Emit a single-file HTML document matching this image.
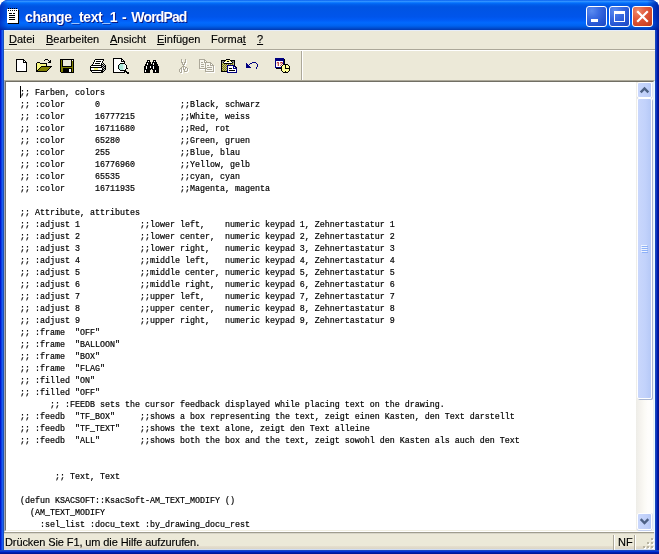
<!DOCTYPE html>
<html lang="de">
<head>
<meta charset="utf-8">
<title>change_text_1 - WordPad</title>
<style>
html,body{margin:0;padding:0;}
body{width:659px;height:554px;overflow:hidden;background:#fff;position:relative;font-family:"Liberation Sans",sans-serif;}
div,span,pre,svg{position:absolute;}
#win{left:0;top:0;width:659px;height:554px;background:#0831d9;border-radius:8px 8px 0 0;overflow:hidden;}
#title{left:0;top:0;width:659px;height:30px;
background:linear-gradient(to bottom,#0058ee 0%,#3593ff 4%,#288eff 6%,#127dff 8%,#036ffc 10%,#0262ee 14%,#0057e5 20%,#0054e3 24%,#0055eb 56%,#005bf5 66%,#026afe 76%,#0062ef 86%,#0052d6 92%,#0046c4 96%,#0138b0 100%);}
#title .edgeL{left:0;top:0;width:8px;height:30px;background:linear-gradient(to right,rgba(0,20,160,.55),rgba(0,20,160,0));}
#title .edgeR{right:0;top:0;width:12px;height:30px;background:linear-gradient(to left,rgba(0,15,140,.75),rgba(0,20,160,0));}
#cap{left:25px;top:9px;color:#fff;font-weight:bold;font-size:14px;line-height:16px;white-space:nowrap;letter-spacing:-0.4px;word-spacing:1.5px;text-shadow:1px 1px 0 #0a1883;}
.tb{top:6px;width:19px;height:19px;border:1px solid #fff;border-radius:3px;}
.tb.blue{background:radial-gradient(circle at 25% 20%,#5a8bf0 0%,#3a6be2 35%,#2555d2 70%,#1f48c0 100%);}
.tb.red{background:radial-gradient(circle at 25% 20%,#ee8a6c 0%,#e0583a 40%,#cf4526 75%,#b83a1c 100%);}
#bl{left:0;top:30px;width:4px;height:524px;background:linear-gradient(to right,#0019cf 0,#0019cf 1px,#0d3fe3 1px,#0d3fe3 2px,#1a5df0 2px,#1a5df0 3px,#1a50bb 3px);}
#br{right:0;top:30px;width:4px;height:524px;background:linear-gradient(to left,#00138f 0,#00138f 1px,#001aa8 1px,#001aa8 2px,#0c34c2 2px,#0c34c2 3px,#1846b8 3px);}
#bb{left:0;bottom:0;width:659px;height:4px;background:linear-gradient(to top,#001898 0,#001898 1px,#0020b0 1px,#0020b0 2px,#0435d8 2px,#0435d8 3px,#1a48c0 3px);}
#client{left:4px;top:30px;width:651px;height:520px;background:#ece9d8;box-shadow:inset 0 1px 0 #e6edfa;}
#menu{left:0;top:0;width:651px;height:19px;font-size:11px;color:#000;}
#menu span{top:3px;line-height:13px;white-space:nowrap;}
#sep1{left:0;top:19px;width:651px;height:1px;background:#aca899;}
#sep2{left:0;top:20px;width:651px;height:1px;background:#fff;}
#tsep1{left:297px;top:21px;width:1px;height:29px;background:#aca899;}
#tsep2{left:298px;top:21px;width:1px;height:29px;background:#fff;}
#icons{left:0;top:0;width:659px;height:554px;}
#doc{left:0;top:50px;width:651px;height:452px;background:#fff;box-sizing:border-box;border:1px solid;border-color:#aca899 #e8fbff #fff #9ba5bb;}
#doc .in{left:0;top:0;width:649px;height:450px;box-sizing:border-box;border:1px solid;border-color:#716f64 #e9f0f8 #f1efe2 #75736a;}
#text{left:15px;top:6px;margin:0;font-family:"Liberation Mono",monospace;font-size:8.33px;line-height:12px;color:#000;white-space:pre;-webkit-text-stroke:0.2px #000;}
#caret{left:15px;top:5px;width:1px;height:12px;background:#000;}
#sb{left:631px;top:1px;width:17px;height:448px;background:linear-gradient(to right,#eeede8 0%,#f5f3ee 25%,#fbfaf5 50%,#fefdfb 70%,#fefefb 100%);}
.sbtn{left:1px;width:13px;height:14px;border:1px solid #fff;border-radius:2px;background:linear-gradient(to right,#c9d7fc,#bfcff9 70%,#b6c8f6);box-shadow:0 1px 0 #c4d0ee,1px 0 0 #dde4f4;}
#thumb{left:1px;top:16px;width:13px;height:299px;border:1px solid #fff;border-radius:2px;background:linear-gradient(to right,#c9d7fc,#c2d2fb 55%,#b6c9f7);box-shadow:1px 1px 0 #a9b6d2;}
#status{box-shadow:inset -1px 0 0 #e2eafa;left:0;top:502px;width:651px;height:18px;font-size:11px;background:linear-gradient(to bottom,#a09d8e 0,#a09d8e 1px,#d8d5c8 1px,#d8d5c8 2px,#ece9d8 2px,#ece9d8 14px,#e6dfcf 14px,#dbd6c6 17px,#d0ddf5 17px,#d0ddf5 18px);}
#status .t{left:2px;top:4px;line-height:13px;white-space:nowrap;}
.ssep{top:3px;width:1px;height:15px;}
#text,#menu,#status,#cap{will-change:transform;}
#menu,#status{-webkit-text-stroke:0.15px #000;}
</style>
</head>
<body>
<div id="win">
<div id="title"><div class="edgeL"></div><div class="edgeR"></div>
<div id="cap">change_text_1 - <span style="position:static;letter-spacing:-0.85px">WordPad</span></div>
<div class="tb blue" style="left:586px"><svg width="19" height="19" viewBox="0 0 19 19"><rect x="4" y="12" width="7" height="3" fill="#fff"/></svg></div>
<div class="tb blue" style="left:609px"><svg width="19" height="19" viewBox="0 0 19 19"><g fill="#fff" shape-rendering="crispEdges"><rect x="4" y="4" width="11" height="3"/><rect x="4" y="4" width="1" height="11"/><rect x="14" y="4" width="1" height="11"/><rect x="4" y="14" width="11" height="1"/></g></svg></div>
<div class="tb red" style="left:632px"><svg width="19" height="19" viewBox="0 0 19 19"><path d="M5 5l9 9M14 5l-9 9" stroke="#fff" stroke-width="2.2" stroke-linecap="square"/></svg></div>
</div>
<div id="bl"></div><div id="br"></div><div id="bb"></div>
<div id="client">
<div id="menu">
<span style="left:5px"><u>D</u>atei</span>
<span style="left:42px"><u>B</u>earbeiten</span>
<span style="left:106px"><u>A</u>nsicht</span>
<span style="left:153px"><u>E</u>infügen</span>
<span style="left:207px">Forma<u>t</u></span>
<span style="left:253px"><u>?</u></span>
</div>
<div id="sep1"></div><div id="sep2"></div>
<div id="tsep1"></div><div id="tsep2"></div>
<div id="doc"><div class="in"></div>
<pre id="text">;; Farben, colors
;; :color      0                ;;Black, schwarz
;; :color      16777215         ;;White, weiss
;; :color      16711680         ;;Red, rot
;; :color      65280            ;;Green, gruen
;; :color      255              ;;Blue, blau
;; :color      16776960         ;;Yellow, gelb
;; :color      65535            ;;cyan, cyan
;; :color      16711935         ;;Magenta, magenta

;; Attribute, attributes
;; :adjust 1            ;;lower left,    numeric keypad 1, Zehnertastatur 1
;; :adjust 2            ;;lower center,  numeric keypad 2, Zehnertastatur 2
;; :adjust 3            ;;lower right,   numeric keypad 3, Zehnertastatur 3
;; :adjust 4            ;;middle left,   numeric keypad 4, Zehnertastatur 4
;; :adjust 5            ;;middle center, numeric keypad 5, Zehnertastatur 5
;; :adjust 6            ;;middle right,  numeric keypad 6, Zehnertastatur 6
;; :adjust 7            ;;upper left,    numeric keypad 7, Zehnertastatur 7
;; :adjust 8            ;;upper center,  numeric keypad 8, Zehnertastatur 8
;; :adjust 9            ;;upper right,   numeric keypad 9, Zehnertastatur 9
;; :frame  "OFF"
;; :frame  "BALLOON"
;; :frame  "BOX"
;; :frame  "FLAG"
;; :filled "ON"
;; :filled "OFF"
      ;; :FEEDB sets the cursor feedback displayed while placing text on the drawing.
;; :feedb  "TF_BOX"     ;;shows a box representing the text, zeigt einen Kasten, den Text darstellt
;; :feedb  "TF_TEXT"    ;;shows the text alone, zeigt den Text alleine
;; :feedb  "ALL"        ;;shows both the box and the text, zeigt sowohl den Kasten als auch den Text


       ;; Text, Text

(defun KSACSOFT::KsacSoft-AM_TEXT_MODIFY ()
  (AM_TEXT_MODIFY
    :sel_list :docu_text :by_drawing_docu_rest
</pre>
<div id="caret"></div>
<div id="sb">
<div class="sbtn" style="top:0px"><svg width="13" height="14" viewBox="0 0 13 14"><path d="M2.7 9.3l3.8-3.8 3.8 3.8" fill="none" stroke="#4d6185" stroke-width="2.4"/></svg></div>
<div id="thumb"><svg width="13" height="299" viewBox="0 0 13 299" shape-rendering="crispEdges"><g transform="translate(3,146)"><rect x="0" y="0" width="6" height="1" fill="#eef4fe"/><rect x="1" y="1" width="6" height="1" fill="#8cb0f8"/><rect x="0" y="2" width="6" height="1" fill="#eef4fe"/><rect x="1" y="3" width="6" height="1" fill="#8cb0f8"/><rect x="0" y="4" width="6" height="1" fill="#eef4fe"/><rect x="1" y="5" width="6" height="1" fill="#8cb0f8"/><rect x="0" y="6" width="6" height="1" fill="#eef4fe"/><rect x="1" y="7" width="6" height="1" fill="#8cb0f8"/></g></svg></div>
<div class="sbtn" style="top:431px;height:15px"><svg width="13" height="15" viewBox="0 0 13 15"><path d="M2.7 5.2l3.8 3.8 3.8-3.8" fill="none" stroke="#4d6185" stroke-width="2.4"/></svg></div>
</div>
</div>
<div id="status"><div class="t" style="left:1px;letter-spacing:-0.1px">Drücken Sie F1, um die Hilfe aufzurufen.</div>
<div class="ssep" style="left:609px;background:#aca899"></div><div class="ssep" style="left:610px;background:#fff"></div>
<div class="t" style="left:614px">NF</div>
<div class="ssep" style="left:630px;background:#aca899"></div><div class="ssep" style="left:631px;background:#fff"></div>
<svg style="left:638px;top:5px" width="13" height="13" viewBox="0 0 13 13"><g fill="#fff"><rect x="10" y="2" width="2" height="2"/><rect x="6" y="6" width="2" height="2"/><rect x="10" y="6" width="2" height="2"/><rect x="2" y="10" width="2" height="2"/><rect x="6" y="10" width="2" height="2"/><rect x="10" y="10" width="2" height="2"/></g><g fill="#b8b4a2"><rect x="9" y="1" width="2" height="2"/><rect x="5" y="5" width="2" height="2"/><rect x="9" y="5" width="2" height="2"/><rect x="1" y="9" width="2" height="2"/><rect x="5" y="9" width="2" height="2"/><rect x="9" y="9" width="2" height="2"/></g></svg>
</div>
</div>
<svg id="icons" width="659" height="554" viewBox="0 0 659 554" shape-rendering="crispEdges"><defs><clipPath id="calclip"><path d="M276 61h7v3h-1v1h-1v1h-5z"/></clipPath></defs><rect x="16" y="59" width="8" height="1" fill="#000000"/><rect x="16" y="60" width="1" height="1" fill="#000000"/><rect x="17" y="60" width="6" height="1" fill="#ffffff"/><rect x="23" y="60" width="2" height="1" fill="#000000"/><rect x="16" y="61" width="1" height="1" fill="#000000"/><rect x="17" y="61" width="6" height="1" fill="#ffffff"/><rect x="23" y="61" width="1" height="1" fill="#000000"/><rect x="24" y="61" width="1" height="1" fill="#ffffff"/><rect x="25" y="61" width="1" height="1" fill="#000000"/><rect x="16" y="62" width="1" height="1" fill="#000000"/><rect x="17" y="62" width="6" height="1" fill="#ffffff"/><rect x="23" y="62" width="4" height="1" fill="#000000"/><rect x="16" y="63" width="1" height="1" fill="#000000"/><rect x="17" y="63" width="9" height="1" fill="#ffffff"/><rect x="26" y="63" width="1" height="1" fill="#000000"/><rect x="16" y="64" width="1" height="1" fill="#000000"/><rect x="17" y="64" width="9" height="1" fill="#ffffff"/><rect x="26" y="64" width="1" height="1" fill="#000000"/><rect x="16" y="65" width="1" height="1" fill="#000000"/><rect x="17" y="65" width="9" height="1" fill="#ffffff"/><rect x="26" y="65" width="1" height="1" fill="#000000"/><rect x="16" y="66" width="1" height="1" fill="#000000"/><rect x="17" y="66" width="9" height="1" fill="#ffffff"/><rect x="26" y="66" width="1" height="1" fill="#000000"/><rect x="16" y="67" width="1" height="1" fill="#000000"/><rect x="17" y="67" width="9" height="1" fill="#ffffff"/><rect x="26" y="67" width="1" height="1" fill="#000000"/><rect x="16" y="68" width="1" height="1" fill="#000000"/><rect x="17" y="68" width="9" height="1" fill="#ffffff"/><rect x="26" y="68" width="1" height="1" fill="#000000"/><rect x="16" y="69" width="1" height="1" fill="#000000"/><rect x="17" y="69" width="9" height="1" fill="#ffffff"/><rect x="26" y="69" width="1" height="1" fill="#000000"/><rect x="16" y="70" width="1" height="1" fill="#000000"/><rect x="17" y="70" width="9" height="1" fill="#ffffff"/><rect x="26" y="70" width="1" height="1" fill="#000000"/><rect x="16" y="71" width="11" height="1" fill="#000000"/><rect x="45" y="59" width="3" height="1" fill="#000000"/><rect x="44" y="60" width="1" height="1" fill="#000000"/><rect x="48" y="60" width="1" height="1" fill="#000000"/><rect x="50" y="60" width="1" height="1" fill="#000000"/><rect x="49" y="61" width="2" height="1" fill="#000000"/><rect x="37" y="62" width="3" height="1" fill="#000000"/><rect x="48" y="62" width="3" height="1" fill="#000000"/><rect x="36" y="63" width="1" height="1" fill="#000000"/><rect x="37" y="63" width="3" height="1" fill="#f7f77f"/><rect x="40" y="63" width="7" height="1" fill="#000000"/><rect x="36" y="64" width="1" height="1" fill="#000000"/><rect x="37" y="64" width="9" height="1" fill="#f7f77f"/><rect x="46" y="64" width="1" height="1" fill="#000000"/><rect x="36" y="65" width="1" height="1" fill="#000000"/><rect x="37" y="65" width="9" height="1" fill="#f7f77f"/><rect x="46" y="65" width="1" height="1" fill="#000000"/><rect x="36" y="66" width="1" height="1" fill="#000000"/><rect x="37" y="66" width="4" height="1" fill="#f7f77f"/><rect x="41" y="66" width="11" height="1" fill="#000000"/><rect x="36" y="67" width="1" height="1" fill="#000000"/><rect x="37" y="67" width="3" height="1" fill="#f7f77f"/><rect x="40" y="67" width="1" height="1" fill="#000000"/><rect x="41" y="67" width="9" height="1" fill="#808000"/><rect x="50" y="67" width="1" height="1" fill="#000000"/><rect x="36" y="68" width="1" height="1" fill="#000000"/><rect x="37" y="68" width="2" height="1" fill="#f7f77f"/><rect x="39" y="68" width="1" height="1" fill="#000000"/><rect x="40" y="68" width="9" height="1" fill="#808000"/><rect x="49" y="68" width="1" height="1" fill="#000000"/><rect x="36" y="69" width="1" height="1" fill="#000000"/><rect x="37" y="69" width="1" height="1" fill="#f7f77f"/><rect x="38" y="69" width="1" height="1" fill="#000000"/><rect x="39" y="69" width="9" height="1" fill="#808000"/><rect x="48" y="69" width="1" height="1" fill="#000000"/><rect x="36" y="70" width="2" height="1" fill="#000000"/><rect x="38" y="70" width="9" height="1" fill="#808000"/><rect x="47" y="70" width="1" height="1" fill="#000000"/><rect x="36" y="71" width="11" height="1" fill="#000000"/><rect x="60" y="59" width="14" height="1" fill="#000000"/><rect x="60" y="60" width="1" height="1" fill="#000000"/><rect x="61" y="60" width="1" height="1" fill="#808000"/><rect x="62" y="60" width="1" height="1" fill="#000000"/><rect x="63" y="60" width="8" height="1" fill="#ece9d8"/><rect x="71" y="60" width="1" height="1" fill="#000000"/><rect x="72" y="60" width="1" height="1" fill="#ffffff"/><rect x="73" y="60" width="1" height="1" fill="#000000"/><rect x="60" y="61" width="1" height="1" fill="#000000"/><rect x="61" y="61" width="1" height="1" fill="#808000"/><rect x="62" y="61" width="1" height="1" fill="#000000"/><rect x="63" y="61" width="8" height="1" fill="#ece9d8"/><rect x="71" y="61" width="1" height="1" fill="#000000"/><rect x="72" y="61" width="1" height="1" fill="#808000"/><rect x="73" y="61" width="1" height="1" fill="#000000"/><rect x="60" y="62" width="1" height="1" fill="#000000"/><rect x="61" y="62" width="1" height="1" fill="#808000"/><rect x="62" y="62" width="1" height="1" fill="#000000"/><rect x="63" y="62" width="8" height="1" fill="#ece9d8"/><rect x="71" y="62" width="1" height="1" fill="#000000"/><rect x="72" y="62" width="1" height="1" fill="#808000"/><rect x="73" y="62" width="1" height="1" fill="#000000"/><rect x="60" y="63" width="1" height="1" fill="#000000"/><rect x="61" y="63" width="1" height="1" fill="#808000"/><rect x="62" y="63" width="1" height="1" fill="#000000"/><rect x="63" y="63" width="8" height="1" fill="#ece9d8"/><rect x="71" y="63" width="1" height="1" fill="#000000"/><rect x="72" y="63" width="1" height="1" fill="#808000"/><rect x="73" y="63" width="1" height="1" fill="#000000"/><rect x="60" y="64" width="1" height="1" fill="#000000"/><rect x="61" y="64" width="1" height="1" fill="#808000"/><rect x="62" y="64" width="1" height="1" fill="#000000"/><rect x="63" y="64" width="8" height="1" fill="#ece9d8"/><rect x="71" y="64" width="1" height="1" fill="#000000"/><rect x="72" y="64" width="1" height="1" fill="#808000"/><rect x="73" y="64" width="1" height="1" fill="#000000"/><rect x="60" y="65" width="1" height="1" fill="#000000"/><rect x="61" y="65" width="1" height="1" fill="#808000"/><rect x="62" y="65" width="1" height="1" fill="#000000"/><rect x="63" y="65" width="8" height="1" fill="#ece9d8"/><rect x="71" y="65" width="1" height="1" fill="#000000"/><rect x="72" y="65" width="1" height="1" fill="#808000"/><rect x="73" y="65" width="1" height="1" fill="#000000"/><rect x="60" y="66" width="1" height="1" fill="#000000"/><rect x="61" y="66" width="1" height="1" fill="#808000"/><rect x="62" y="66" width="10" height="1" fill="#000000"/><rect x="72" y="66" width="1" height="1" fill="#808000"/><rect x="73" y="66" width="1" height="1" fill="#000000"/><rect x="60" y="67" width="1" height="1" fill="#000000"/><rect x="61" y="67" width="12" height="1" fill="#808000"/><rect x="73" y="67" width="1" height="1" fill="#000000"/><rect x="60" y="68" width="1" height="1" fill="#000000"/><rect x="61" y="68" width="2" height="1" fill="#808000"/><rect x="63" y="68" width="9" height="1" fill="#000000"/><rect x="72" y="68" width="1" height="1" fill="#808000"/><rect x="73" y="68" width="1" height="1" fill="#000000"/><rect x="60" y="69" width="1" height="1" fill="#000000"/><rect x="61" y="69" width="2" height="1" fill="#808000"/><rect x="63" y="69" width="6" height="1" fill="#000000"/><rect x="69" y="69" width="2" height="1" fill="#ffffff"/><rect x="71" y="69" width="1" height="1" fill="#000000"/><rect x="72" y="69" width="1" height="1" fill="#808000"/><rect x="73" y="69" width="1" height="1" fill="#000000"/><rect x="60" y="70" width="1" height="1" fill="#000000"/><rect x="61" y="70" width="2" height="1" fill="#808000"/><rect x="63" y="70" width="6" height="1" fill="#000000"/><rect x="69" y="70" width="2" height="1" fill="#ffffff"/><rect x="71" y="70" width="1" height="1" fill="#000000"/><rect x="72" y="70" width="1" height="1" fill="#808000"/><rect x="73" y="70" width="1" height="1" fill="#000000"/><rect x="60" y="71" width="1" height="1" fill="#000000"/><rect x="61" y="71" width="2" height="1" fill="#808000"/><rect x="63" y="71" width="6" height="1" fill="#000000"/><rect x="69" y="71" width="2" height="1" fill="#ffffff"/><rect x="71" y="71" width="1" height="1" fill="#000000"/><rect x="72" y="71" width="1" height="1" fill="#808000"/><rect x="73" y="71" width="1" height="1" fill="#000000"/><rect x="61" y="72" width="13" height="1" fill="#000000"/><rect x="95" y="59" width="9" height="1" fill="#000000"/><rect x="94" y="60" width="1" height="1" fill="#000000"/><rect x="95" y="60" width="8" height="1" fill="#ffffff"/><rect x="103" y="60" width="1" height="1" fill="#000000"/><rect x="94" y="61" width="1" height="1" fill="#000000"/><rect x="95" y="61" width="1" height="1" fill="#ffffff"/><rect x="96" y="61" width="5" height="1" fill="#000000"/><rect x="101" y="61" width="1" height="1" fill="#ffffff"/><rect x="102" y="61" width="1" height="1" fill="#000000"/><rect x="93" y="62" width="1" height="1" fill="#000000"/><rect x="94" y="62" width="8" height="1" fill="#ffffff"/><rect x="102" y="62" width="1" height="1" fill="#000000"/><rect x="93" y="63" width="1" height="1" fill="#000000"/><rect x="94" y="63" width="1" height="1" fill="#ffffff"/><rect x="95" y="63" width="5" height="1" fill="#000000"/><rect x="100" y="63" width="1" height="1" fill="#ffffff"/><rect x="101" y="63" width="1" height="1" fill="#000000"/><rect x="103" y="63" width="1" height="1" fill="#000000"/><rect x="92" y="64" width="1" height="1" fill="#000000"/><rect x="93" y="64" width="8" height="1" fill="#ffffff"/><rect x="101" y="64" width="2" height="1" fill="#000000"/><rect x="103" y="64" width="1" height="1" fill="#c0c0c0"/><rect x="104" y="64" width="1" height="1" fill="#000000"/><rect x="91" y="65" width="11" height="1" fill="#000000"/><rect x="102" y="65" width="1" height="1" fill="#c0c0c0"/><rect x="103" y="65" width="1" height="1" fill="#000000"/><rect x="104" y="65" width="1" height="1" fill="#c0c0c0"/><rect x="105" y="65" width="1" height="1" fill="#000000"/><rect x="90" y="66" width="1" height="1" fill="#000000"/><rect x="91" y="66" width="10" height="1" fill="#ffffff"/><rect x="101" y="66" width="2" height="1" fill="#000000"/><rect x="103" y="66" width="1" height="1" fill="#c0c0c0"/><rect x="104" y="66" width="2" height="1" fill="#000000"/><rect x="90" y="67" width="12" height="1" fill="#000000"/><rect x="102" y="67" width="1" height="1" fill="#c0c0c0"/><rect x="103" y="67" width="1" height="1" fill="#000000"/><rect x="104" y="67" width="1" height="1" fill="#c0c0c0"/><rect x="105" y="67" width="1" height="1" fill="#000000"/><rect x="90" y="68" width="1" height="1" fill="#000000"/><rect x="91" y="68" width="3" height="1" fill="#ffffff"/><rect x="94" y="68" width="4" height="1" fill="#f7f77f"/><rect x="98" y="68" width="4" height="1" fill="#ffffff"/><rect x="102" y="68" width="1" height="1" fill="#000000"/><rect x="103" y="68" width="1" height="1" fill="#c0c0c0"/><rect x="104" y="68" width="2" height="1" fill="#000000"/><rect x="90" y="69" width="1" height="1" fill="#000000"/><rect x="91" y="69" width="3" height="1" fill="#ffffff"/><rect x="94" y="69" width="4" height="1" fill="#f7f77f"/><rect x="98" y="69" width="4" height="1" fill="#ffffff"/><rect x="102" y="69" width="2" height="1" fill="#000000"/><rect x="104" y="69" width="1" height="1" fill="#c0c0c0"/><rect x="105" y="69" width="1" height="1" fill="#000000"/><rect x="90" y="70" width="13" height="1" fill="#000000"/><rect x="103" y="70" width="1" height="1" fill="#c0c0c0"/><rect x="104" y="70" width="1" height="1" fill="#000000"/><rect x="91" y="71" width="1" height="1" fill="#000000"/><rect x="92" y="71" width="9" height="1" fill="#ffffff"/><rect x="101" y="71" width="3" height="1" fill="#000000"/><rect x="92" y="72" width="11" height="1" fill="#000000"/><rect x="113" y="58" width="9" height="1" fill="#000000"/><rect x="113" y="59" width="1" height="1" fill="#000000"/><rect x="114" y="59" width="7" height="1" fill="#ffffff"/><rect x="121" y="59" width="2" height="1" fill="#000000"/><rect x="113" y="60" width="1" height="1" fill="#000000"/><rect x="114" y="60" width="7" height="1" fill="#ffffff"/><rect x="121" y="60" width="1" height="1" fill="#000000"/><rect x="122" y="60" width="1" height="1" fill="#ffffff"/><rect x="123" y="60" width="1" height="1" fill="#000000"/><rect x="113" y="61" width="1" height="1" fill="#000000"/><rect x="114" y="61" width="7" height="1" fill="#ffffff"/><rect x="121" y="61" width="4" height="1" fill="#000000"/><rect x="113" y="62" width="1" height="1" fill="#000000"/><rect x="114" y="62" width="10" height="1" fill="#ffffff"/><rect x="124" y="62" width="1" height="1" fill="#000000"/><rect x="113" y="63" width="1" height="1" fill="#000000"/><rect x="114" y="63" width="6" height="1" fill="#ffffff"/><rect x="120" y="63" width="5" height="1" fill="#000000"/><rect x="113" y="64" width="1" height="1" fill="#000000"/><rect x="114" y="64" width="5" height="1" fill="#ffffff"/><rect x="119" y="64" width="1" height="1" fill="#000000"/><rect x="120" y="64" width="3" height="1" fill="#a8e6d6"/><rect x="123" y="64" width="1" height="1" fill="#d6f3ec"/><rect x="124" y="64" width="1" height="1" fill="#ffffff"/><rect x="125" y="64" width="1" height="1" fill="#000000"/><rect x="113" y="65" width="1" height="1" fill="#000000"/><rect x="114" y="65" width="4" height="1" fill="#ffffff"/><rect x="118" y="65" width="1" height="1" fill="#000000"/><rect x="119" y="65" width="4" height="1" fill="#a8e6d6"/><rect x="123" y="65" width="2" height="1" fill="#d6f3ec"/><rect x="125" y="65" width="1" height="1" fill="#ffffff"/><rect x="126" y="65" width="1" height="1" fill="#000000"/><rect x="113" y="66" width="1" height="1" fill="#000000"/><rect x="114" y="66" width="4" height="1" fill="#ffffff"/><rect x="118" y="66" width="1" height="1" fill="#000000"/><rect x="119" y="66" width="4" height="1" fill="#a8e6d6"/><rect x="123" y="66" width="2" height="1" fill="#d6f3ec"/><rect x="125" y="66" width="1" height="1" fill="#ffffff"/><rect x="126" y="66" width="1" height="1" fill="#000000"/><rect x="113" y="67" width="1" height="1" fill="#000000"/><rect x="114" y="67" width="4" height="1" fill="#ffffff"/><rect x="118" y="67" width="1" height="1" fill="#000000"/><rect x="119" y="67" width="4" height="1" fill="#a8e6d6"/><rect x="123" y="67" width="2" height="1" fill="#d6f3ec"/><rect x="125" y="67" width="1" height="1" fill="#ffffff"/><rect x="126" y="67" width="1" height="1" fill="#000000"/><rect x="113" y="68" width="1" height="1" fill="#000000"/><rect x="114" y="68" width="4" height="1" fill="#ffffff"/><rect x="118" y="68" width="1" height="1" fill="#000000"/><rect x="119" y="68" width="4" height="1" fill="#a8e6d6"/><rect x="123" y="68" width="2" height="1" fill="#d6f3ec"/><rect x="125" y="68" width="1" height="1" fill="#ffffff"/><rect x="126" y="68" width="2" height="1" fill="#000000"/><rect x="113" y="69" width="1" height="1" fill="#000000"/><rect x="114" y="69" width="5" height="1" fill="#ffffff"/><rect x="119" y="69" width="1" height="1" fill="#000000"/><rect x="120" y="69" width="3" height="1" fill="#a8e6d6"/><rect x="123" y="69" width="1" height="1" fill="#d6f3ec"/><rect x="124" y="69" width="1" height="1" fill="#ffffff"/><rect x="125" y="69" width="1" height="1" fill="#000000"/><rect x="113" y="70" width="1" height="1" fill="#000000"/><rect x="114" y="70" width="6" height="1" fill="#ffffff"/><rect x="120" y="70" width="6" height="1" fill="#000000"/><rect x="113" y="71" width="1" height="1" fill="#000000"/><rect x="114" y="71" width="10" height="1" fill="#ffffff"/><rect x="124" y="71" width="3" height="1" fill="#000000"/><rect x="113" y="72" width="12" height="1" fill="#000000"/><rect x="126" y="72" width="3" height="1" fill="#000000"/><rect x="127" y="73" width="2" height="1" fill="#000000"/><rect x="147" y="60" width="3" height="1" fill="#000000"/><rect x="153" y="60" width="3" height="1" fill="#000000"/><rect x="147" y="61" width="1" height="1" fill="#000000"/><rect x="148" y="61" width="1" height="1" fill="#ffffff"/><rect x="149" y="61" width="1" height="1" fill="#000000"/><rect x="153" y="61" width="1" height="1" fill="#000000"/><rect x="154" y="61" width="1" height="1" fill="#ffffff"/><rect x="155" y="61" width="1" height="1" fill="#000000"/><rect x="146" y="62" width="5" height="1" fill="#000000"/><rect x="152" y="62" width="5" height="1" fill="#000000"/><rect x="146" y="63" width="1" height="1" fill="#000000"/><rect x="147" y="63" width="1" height="1" fill="#ffffff"/><rect x="148" y="63" width="3" height="1" fill="#000000"/><rect x="152" y="63" width="1" height="1" fill="#000000"/><rect x="153" y="63" width="1" height="1" fill="#ffffff"/><rect x="154" y="63" width="3" height="1" fill="#000000"/><rect x="145" y="64" width="2" height="1" fill="#000000"/><rect x="147" y="64" width="1" height="1" fill="#ffffff"/><rect x="148" y="64" width="5" height="1" fill="#000000"/><rect x="153" y="64" width="1" height="1" fill="#ffffff"/><rect x="154" y="64" width="4" height="1" fill="#000000"/><rect x="145" y="65" width="13" height="1" fill="#000000"/><rect x="144" y="66" width="2" height="1" fill="#000000"/><rect x="146" y="66" width="1" height="1" fill="#ffffff"/><rect x="147" y="66" width="3" height="1" fill="#000000"/><rect x="150" y="66" width="1" height="1" fill="#ffffff"/><rect x="151" y="66" width="2" height="1" fill="#000000"/><rect x="153" y="66" width="1" height="1" fill="#ffffff"/><rect x="154" y="66" width="5" height="1" fill="#000000"/><rect x="144" y="67" width="2" height="1" fill="#000000"/><rect x="146" y="67" width="1" height="1" fill="#ffffff"/><rect x="147" y="67" width="3" height="1" fill="#000000"/><rect x="150" y="67" width="1" height="1" fill="#ffffff"/><rect x="151" y="67" width="2" height="1" fill="#000000"/><rect x="153" y="67" width="1" height="1" fill="#ffffff"/><rect x="154" y="67" width="5" height="1" fill="#000000"/><rect x="144" y="68" width="2" height="1" fill="#000000"/><rect x="146" y="68" width="1" height="1" fill="#ffffff"/><rect x="147" y="68" width="6" height="1" fill="#000000"/><rect x="153" y="68" width="1" height="1" fill="#ffffff"/><rect x="154" y="68" width="5" height="1" fill="#000000"/><rect x="144" y="69" width="7" height="1" fill="#000000"/><rect x="152" y="69" width="7" height="1" fill="#000000"/><rect x="144" y="70" width="1" height="1" fill="#000000"/><rect x="145" y="70" width="1" height="1" fill="#ffffff"/><rect x="146" y="70" width="4" height="1" fill="#000000"/><rect x="153" y="70" width="2" height="1" fill="#000000"/><rect x="155" y="70" width="1" height="1" fill="#ffffff"/><rect x="156" y="70" width="3" height="1" fill="#000000"/><rect x="144" y="71" width="1" height="1" fill="#000000"/><rect x="145" y="71" width="1" height="1" fill="#ffffff"/><rect x="146" y="71" width="4" height="1" fill="#000000"/><rect x="153" y="71" width="2" height="1" fill="#000000"/><rect x="155" y="71" width="1" height="1" fill="#ffffff"/><rect x="156" y="71" width="3" height="1" fill="#000000"/><rect x="144" y="72" width="6" height="1" fill="#000000"/><rect x="153" y="72" width="6" height="1" fill="#000000"/><rect x="182" y="60" width="1" height="1" fill="#ffffff"/><rect x="186" y="60" width="1" height="1" fill="#ffffff"/><rect x="182" y="61" width="1" height="1" fill="#ffffff"/><rect x="186" y="61" width="1" height="1" fill="#ffffff"/><rect x="182" y="62" width="1" height="1" fill="#ffffff"/><rect x="186" y="62" width="1" height="1" fill="#ffffff"/><rect x="182" y="63" width="2" height="1" fill="#ffffff"/><rect x="185" y="63" width="2" height="1" fill="#ffffff"/><rect x="183" y="64" width="1" height="1" fill="#ffffff"/><rect x="185" y="64" width="1" height="1" fill="#ffffff"/><rect x="183" y="65" width="3" height="1" fill="#ffffff"/><rect x="184" y="66" width="1" height="1" fill="#ffffff"/><rect x="183" y="67" width="3" height="1" fill="#ffffff"/><rect x="182" y="68" width="1" height="1" fill="#ffffff"/><rect x="184" y="68" width="1" height="1" fill="#ffffff"/><rect x="186" y="68" width="2" height="1" fill="#ffffff"/><rect x="181" y="69" width="2" height="1" fill="#ffffff"/><rect x="184" y="69" width="1" height="1" fill="#ffffff"/><rect x="186" y="69" width="1" height="1" fill="#ffffff"/><rect x="188" y="69" width="1" height="1" fill="#ffffff"/><rect x="180" y="70" width="1" height="1" fill="#ffffff"/><rect x="182" y="70" width="1" height="1" fill="#ffffff"/><rect x="184" y="70" width="2" height="1" fill="#ffffff"/><rect x="188" y="70" width="1" height="1" fill="#ffffff"/><rect x="180" y="71" width="1" height="1" fill="#ffffff"/><rect x="182" y="71" width="1" height="1" fill="#ffffff"/><rect x="185" y="71" width="1" height="1" fill="#ffffff"/><rect x="188" y="71" width="1" height="1" fill="#ffffff"/><rect x="180" y="72" width="1" height="1" fill="#ffffff"/><rect x="182" y="72" width="1" height="1" fill="#ffffff"/><rect x="185" y="72" width="3" height="1" fill="#ffffff"/><rect x="181" y="73" width="2" height="1" fill="#ffffff"/><rect x="181" y="59" width="1" height="1" fill="#aca899"/><rect x="185" y="59" width="1" height="1" fill="#aca899"/><rect x="181" y="60" width="1" height="1" fill="#aca899"/><rect x="185" y="60" width="1" height="1" fill="#aca899"/><rect x="181" y="61" width="1" height="1" fill="#aca899"/><rect x="185" y="61" width="1" height="1" fill="#aca899"/><rect x="181" y="62" width="2" height="1" fill="#aca899"/><rect x="184" y="62" width="2" height="1" fill="#aca899"/><rect x="182" y="63" width="1" height="1" fill="#aca899"/><rect x="184" y="63" width="1" height="1" fill="#aca899"/><rect x="182" y="64" width="3" height="1" fill="#aca899"/><rect x="183" y="65" width="1" height="1" fill="#aca899"/><rect x="182" y="66" width="3" height="1" fill="#aca899"/><rect x="181" y="67" width="1" height="1" fill="#aca899"/><rect x="183" y="67" width="1" height="1" fill="#aca899"/><rect x="185" y="67" width="2" height="1" fill="#aca899"/><rect x="180" y="68" width="2" height="1" fill="#aca899"/><rect x="183" y="68" width="1" height="1" fill="#aca899"/><rect x="185" y="68" width="1" height="1" fill="#aca899"/><rect x="187" y="68" width="1" height="1" fill="#aca899"/><rect x="179" y="69" width="1" height="1" fill="#aca899"/><rect x="181" y="69" width="1" height="1" fill="#aca899"/><rect x="183" y="69" width="2" height="1" fill="#aca899"/><rect x="187" y="69" width="1" height="1" fill="#aca899"/><rect x="179" y="70" width="1" height="1" fill="#aca899"/><rect x="181" y="70" width="1" height="1" fill="#aca899"/><rect x="184" y="70" width="1" height="1" fill="#aca899"/><rect x="187" y="70" width="1" height="1" fill="#aca899"/><rect x="179" y="71" width="1" height="1" fill="#aca899"/><rect x="181" y="71" width="1" height="1" fill="#aca899"/><rect x="184" y="71" width="3" height="1" fill="#aca899"/><rect x="180" y="72" width="2" height="1" fill="#aca899"/><rect x="200" y="60" width="6" height="1" fill="#ffffff"/><rect x="200" y="61" width="1" height="1" fill="#ffffff"/><rect x="205" y="61" width="2" height="1" fill="#ffffff"/><rect x="200" y="62" width="1" height="1" fill="#ffffff"/><rect x="205" y="62" width="1" height="1" fill="#ffffff"/><rect x="207" y="62" width="1" height="1" fill="#ffffff"/><rect x="200" y="63" width="1" height="1" fill="#ffffff"/><rect x="202" y="63" width="2" height="1" fill="#ffffff"/><rect x="205" y="63" width="7" height="1" fill="#ffffff"/><rect x="200" y="64" width="1" height="1" fill="#ffffff"/><rect x="206" y="64" width="1" height="1" fill="#ffffff"/><rect x="211" y="64" width="2" height="1" fill="#ffffff"/><rect x="200" y="65" width="1" height="1" fill="#ffffff"/><rect x="202" y="65" width="3" height="1" fill="#ffffff"/><rect x="206" y="65" width="1" height="1" fill="#ffffff"/><rect x="211" y="65" width="1" height="1" fill="#ffffff"/><rect x="213" y="65" width="1" height="1" fill="#ffffff"/><rect x="200" y="66" width="1" height="1" fill="#ffffff"/><rect x="206" y="66" width="1" height="1" fill="#ffffff"/><rect x="208" y="66" width="2" height="1" fill="#ffffff"/><rect x="211" y="66" width="4" height="1" fill="#ffffff"/><rect x="200" y="67" width="1" height="1" fill="#ffffff"/><rect x="202" y="67" width="3" height="1" fill="#ffffff"/><rect x="206" y="67" width="1" height="1" fill="#ffffff"/><rect x="214" y="67" width="1" height="1" fill="#ffffff"/><rect x="200" y="68" width="1" height="1" fill="#ffffff"/><rect x="206" y="68" width="1" height="1" fill="#ffffff"/><rect x="208" y="68" width="5" height="1" fill="#ffffff"/><rect x="214" y="68" width="1" height="1" fill="#ffffff"/><rect x="200" y="69" width="8" height="1" fill="#ffffff"/><rect x="214" y="69" width="1" height="1" fill="#ffffff"/><rect x="206" y="70" width="1" height="1" fill="#ffffff"/><rect x="208" y="70" width="5" height="1" fill="#ffffff"/><rect x="214" y="70" width="1" height="1" fill="#ffffff"/><rect x="206" y="71" width="1" height="1" fill="#ffffff"/><rect x="214" y="71" width="1" height="1" fill="#ffffff"/><rect x="206" y="72" width="9" height="1" fill="#ffffff"/><rect x="199" y="59" width="6" height="1" fill="#aca899"/><rect x="199" y="60" width="1" height="1" fill="#aca899"/><rect x="200" y="60" width="4" height="1" fill="#f8f7f0"/><rect x="204" y="60" width="2" height="1" fill="#aca899"/><rect x="199" y="61" width="1" height="1" fill="#aca899"/><rect x="200" y="61" width="4" height="1" fill="#f8f7f0"/><rect x="204" y="61" width="1" height="1" fill="#aca899"/><rect x="205" y="61" width="1" height="1" fill="#ffffff"/><rect x="206" y="61" width="1" height="1" fill="#aca899"/><rect x="199" y="62" width="1" height="1" fill="#aca899"/><rect x="200" y="62" width="1" height="1" fill="#f8f7f0"/><rect x="201" y="62" width="2" height="1" fill="#aca899"/><rect x="203" y="62" width="1" height="1" fill="#f8f7f0"/><rect x="204" y="62" width="7" height="1" fill="#aca899"/><rect x="199" y="63" width="1" height="1" fill="#aca899"/><rect x="200" y="63" width="5" height="1" fill="#f8f7f0"/><rect x="205" y="63" width="1" height="1" fill="#aca899"/><rect x="206" y="63" width="4" height="1" fill="#f8f7f0"/><rect x="210" y="63" width="2" height="1" fill="#aca899"/><rect x="199" y="64" width="1" height="1" fill="#aca899"/><rect x="200" y="64" width="1" height="1" fill="#f8f7f0"/><rect x="201" y="64" width="3" height="1" fill="#aca899"/><rect x="204" y="64" width="1" height="1" fill="#f8f7f0"/><rect x="205" y="64" width="1" height="1" fill="#aca899"/><rect x="206" y="64" width="4" height="1" fill="#f8f7f0"/><rect x="210" y="64" width="1" height="1" fill="#aca899"/><rect x="211" y="64" width="1" height="1" fill="#ffffff"/><rect x="212" y="64" width="1" height="1" fill="#aca899"/><rect x="199" y="65" width="1" height="1" fill="#aca899"/><rect x="200" y="65" width="5" height="1" fill="#f8f7f0"/><rect x="205" y="65" width="1" height="1" fill="#aca899"/><rect x="206" y="65" width="1" height="1" fill="#f8f7f0"/><rect x="207" y="65" width="2" height="1" fill="#aca899"/><rect x="209" y="65" width="1" height="1" fill="#f8f7f0"/><rect x="210" y="65" width="4" height="1" fill="#aca899"/><rect x="199" y="66" width="1" height="1" fill="#aca899"/><rect x="200" y="66" width="1" height="1" fill="#f8f7f0"/><rect x="201" y="66" width="3" height="1" fill="#aca899"/><rect x="204" y="66" width="1" height="1" fill="#f8f7f0"/><rect x="205" y="66" width="1" height="1" fill="#aca899"/><rect x="206" y="66" width="7" height="1" fill="#f8f7f0"/><rect x="213" y="66" width="1" height="1" fill="#aca899"/><rect x="199" y="67" width="1" height="1" fill="#aca899"/><rect x="200" y="67" width="5" height="1" fill="#f8f7f0"/><rect x="205" y="67" width="1" height="1" fill="#aca899"/><rect x="206" y="67" width="1" height="1" fill="#f8f7f0"/><rect x="207" y="67" width="5" height="1" fill="#aca899"/><rect x="212" y="67" width="1" height="1" fill="#f8f7f0"/><rect x="213" y="67" width="1" height="1" fill="#aca899"/><rect x="199" y="68" width="8" height="1" fill="#aca899"/><rect x="207" y="68" width="6" height="1" fill="#f8f7f0"/><rect x="213" y="68" width="1" height="1" fill="#aca899"/><rect x="205" y="69" width="1" height="1" fill="#aca899"/><rect x="206" y="69" width="1" height="1" fill="#f8f7f0"/><rect x="207" y="69" width="5" height="1" fill="#aca899"/><rect x="212" y="69" width="1" height="1" fill="#f8f7f0"/><rect x="213" y="69" width="1" height="1" fill="#aca899"/><rect x="205" y="70" width="1" height="1" fill="#aca899"/><rect x="206" y="70" width="7" height="1" fill="#f8f7f0"/><rect x="213" y="70" width="1" height="1" fill="#aca899"/><rect x="205" y="71" width="9" height="1" fill="#aca899"/><rect x="226" y="59" width="4" height="1" fill="#000000"/><rect x="221" y="60" width="5" height="1" fill="#000000"/><rect x="226" y="60" width="4" height="1" fill="#ffff99"/><rect x="230" y="60" width="5" height="1" fill="#000000"/><rect x="221" y="61" width="1" height="1" fill="#000000"/><rect x="222" y="61" width="2" height="1" fill="#808080"/><rect x="224" y="61" width="1" height="1" fill="#000000"/><rect x="225" y="61" width="2" height="1" fill="#ffff99"/><rect x="227" y="61" width="2" height="1" fill="#000000"/><rect x="229" y="61" width="2" height="1" fill="#ffff99"/><rect x="231" y="61" width="1" height="1" fill="#000000"/><rect x="232" y="61" width="2" height="1" fill="#808080"/><rect x="234" y="61" width="1" height="1" fill="#000000"/><rect x="221" y="62" width="1" height="1" fill="#000000"/><rect x="222" y="62" width="1" height="1" fill="#808080"/><rect x="223" y="62" width="1" height="1" fill="#000000"/><rect x="224" y="62" width="8" height="1" fill="#ffffff"/><rect x="232" y="62" width="1" height="1" fill="#000000"/><rect x="233" y="62" width="1" height="1" fill="#808080"/><rect x="234" y="62" width="1" height="1" fill="#000000"/><rect x="221" y="63" width="1" height="1" fill="#000000"/><rect x="222" y="63" width="1" height="1" fill="#bcbc94"/><rect x="223" y="63" width="1" height="1" fill="#808000"/><rect x="224" y="63" width="8" height="1" fill="#000000"/><rect x="232" y="63" width="1" height="1" fill="#808000"/><rect x="233" y="63" width="1" height="1" fill="#bcbc94"/><rect x="234" y="63" width="1" height="1" fill="#000000"/><rect x="221" y="64" width="1" height="1" fill="#000000"/><rect x="222" y="64" width="1" height="1" fill="#808000"/><rect x="223" y="64" width="1" height="1" fill="#bcbc94"/><rect x="224" y="64" width="1" height="1" fill="#808000"/><rect x="225" y="64" width="1" height="1" fill="#bcbc94"/><rect x="226" y="64" width="1" height="1" fill="#808000"/><rect x="227" y="64" width="1" height="1" fill="#bcbc94"/><rect x="228" y="64" width="1" height="1" fill="#808000"/><rect x="229" y="64" width="1" height="1" fill="#bcbc94"/><rect x="230" y="64" width="1" height="1" fill="#808000"/><rect x="231" y="64" width="1" height="1" fill="#bcbc94"/><rect x="232" y="64" width="1" height="1" fill="#808000"/><rect x="233" y="64" width="1" height="1" fill="#bcbc94"/><rect x="234" y="64" width="1" height="1" fill="#000000"/><rect x="221" y="65" width="1" height="1" fill="#000000"/><rect x="222" y="65" width="1" height="1" fill="#bcbc94"/><rect x="223" y="65" width="1" height="1" fill="#808000"/><rect x="224" y="65" width="1" height="1" fill="#bcbc94"/><rect x="225" y="65" width="1" height="1" fill="#808000"/><rect x="226" y="65" width="1" height="1" fill="#bcbc94"/><rect x="227" y="65" width="7" height="1" fill="#000080"/><rect x="234" y="65" width="1" height="1" fill="#000000"/><rect x="221" y="66" width="1" height="1" fill="#000000"/><rect x="222" y="66" width="1" height="1" fill="#808000"/><rect x="223" y="66" width="1" height="1" fill="#bcbc94"/><rect x="224" y="66" width="1" height="1" fill="#808000"/><rect x="225" y="66" width="1" height="1" fill="#bcbc94"/><rect x="226" y="66" width="1" height="1" fill="#808000"/><rect x="227" y="66" width="1" height="1" fill="#000080"/><rect x="228" y="66" width="5" height="1" fill="#ffffff"/><rect x="233" y="66" width="2" height="1" fill="#000080"/><rect x="235" y="66" width="1" height="1" fill="#000000"/><rect x="221" y="67" width="1" height="1" fill="#000000"/><rect x="222" y="67" width="1" height="1" fill="#bcbc94"/><rect x="223" y="67" width="1" height="1" fill="#808000"/><rect x="224" y="67" width="1" height="1" fill="#bcbc94"/><rect x="225" y="67" width="1" height="1" fill="#808000"/><rect x="226" y="67" width="1" height="1" fill="#bcbc94"/><rect x="227" y="67" width="1" height="1" fill="#000080"/><rect x="228" y="67" width="5" height="1" fill="#ffffff"/><rect x="233" y="67" width="1" height="1" fill="#000080"/><rect x="234" y="67" width="1" height="1" fill="#ffffff"/><rect x="235" y="67" width="1" height="1" fill="#000080"/><rect x="236" y="67" width="1" height="1" fill="#000000"/><rect x="221" y="68" width="1" height="1" fill="#000000"/><rect x="222" y="68" width="1" height="1" fill="#808000"/><rect x="223" y="68" width="1" height="1" fill="#bcbc94"/><rect x="224" y="68" width="1" height="1" fill="#808000"/><rect x="225" y="68" width="1" height="1" fill="#bcbc94"/><rect x="226" y="68" width="1" height="1" fill="#808000"/><rect x="227" y="68" width="1" height="1" fill="#000080"/><rect x="228" y="68" width="1" height="1" fill="#ffffff"/><rect x="229" y="68" width="3" height="1" fill="#000000"/><rect x="232" y="68" width="1" height="1" fill="#ffffff"/><rect x="233" y="68" width="4" height="1" fill="#000080"/><rect x="221" y="69" width="1" height="1" fill="#000000"/><rect x="222" y="69" width="1" height="1" fill="#bcbc94"/><rect x="223" y="69" width="1" height="1" fill="#808000"/><rect x="224" y="69" width="1" height="1" fill="#bcbc94"/><rect x="225" y="69" width="1" height="1" fill="#808000"/><rect x="226" y="69" width="1" height="1" fill="#bcbc94"/><rect x="227" y="69" width="1" height="1" fill="#000080"/><rect x="228" y="69" width="8" height="1" fill="#ffffff"/><rect x="236" y="69" width="1" height="1" fill="#000080"/><rect x="221" y="70" width="1" height="1" fill="#000000"/><rect x="222" y="70" width="1" height="1" fill="#808000"/><rect x="223" y="70" width="1" height="1" fill="#bcbc94"/><rect x="224" y="70" width="1" height="1" fill="#808000"/><rect x="225" y="70" width="1" height="1" fill="#bcbc94"/><rect x="226" y="70" width="1" height="1" fill="#808000"/><rect x="227" y="70" width="1" height="1" fill="#000080"/><rect x="228" y="70" width="1" height="1" fill="#ffffff"/><rect x="229" y="70" width="6" height="1" fill="#000000"/><rect x="235" y="70" width="1" height="1" fill="#ffffff"/><rect x="236" y="70" width="1" height="1" fill="#000080"/><rect x="221" y="71" width="6" height="1" fill="#000000"/><rect x="227" y="71" width="1" height="1" fill="#000080"/><rect x="228" y="71" width="8" height="1" fill="#ffffff"/><rect x="236" y="71" width="1" height="1" fill="#000080"/><rect x="227" y="72" width="10" height="1" fill="#000080"/><rect x="252" y="62" width="4" height="1" fill="#000080"/><rect x="246" y="63" width="1" height="1" fill="#000080"/><rect x="250" y="63" width="2" height="1" fill="#000080"/><rect x="256" y="63" width="1" height="1" fill="#000080"/><rect x="246" y="64" width="2" height="1" fill="#000080"/><rect x="249" y="64" width="1" height="1" fill="#000080"/><rect x="257" y="64" width="1" height="1" fill="#000080"/><rect x="246" y="65" width="3" height="1" fill="#000080"/><rect x="257" y="65" width="1" height="1" fill="#000080"/><rect x="246" y="66" width="4" height="1" fill="#000080"/><rect x="257" y="66" width="1" height="1" fill="#000080"/><rect x="246" y="67" width="5" height="1" fill="#000080"/><rect x="256" y="67" width="1" height="1" fill="#000080"/><rect x="256" y="68" width="1" height="1" fill="#000080"/><rect x="275" y="58" width="9" height="1" fill="#000080"/><rect x="275" y="59" width="9" height="1" fill="#000080"/><rect x="284" y="59" width="1" height="1" fill="#000000"/><rect x="275" y="60" width="9" height="1" fill="#000080"/><rect x="284" y="60" width="1" height="1" fill="#000000"/><rect x="275" y="61" width="1" height="1" fill="#000080"/><rect x="276" y="61" width="7" height="1" fill="#ffffff"/><rect x="283" y="61" width="1" height="1" fill="#000080"/><rect x="284" y="61" width="1" height="1" fill="#000000"/><rect x="275" y="62" width="1" height="1" fill="#000080"/><rect x="276" y="62" width="7" height="1" fill="#ffffff"/><rect x="283" y="62" width="1" height="1" fill="#000080"/><rect x="284" y="62" width="1" height="1" fill="#000000"/><rect x="275" y="63" width="1" height="1" fill="#000080"/><rect x="276" y="63" width="7" height="1" fill="#ffffff"/><rect x="283" y="63" width="1" height="1" fill="#000080"/><rect x="284" y="63" width="1" height="1" fill="#000000"/><rect x="275" y="64" width="1" height="1" fill="#000080"/><rect x="276" y="64" width="7" height="1" fill="#ffffff"/><rect x="283" y="64" width="5" height="1" fill="#000000"/><rect x="275" y="65" width="1" height="1" fill="#000080"/><rect x="276" y="65" width="6" height="1" fill="#ffffff"/><rect x="282" y="65" width="1" height="1" fill="#000000"/><rect x="283" y="65" width="2" height="1" fill="#ffff99"/><rect x="285" y="65" width="1" height="1" fill="#000000"/><rect x="286" y="65" width="2" height="1" fill="#ffff99"/><rect x="288" y="65" width="1" height="1" fill="#000000"/><rect x="275" y="66" width="1" height="1" fill="#000080"/><rect x="276" y="66" width="5" height="1" fill="#ffffff"/><rect x="281" y="66" width="1" height="1" fill="#000000"/><rect x="282" y="66" width="3" height="1" fill="#ffff99"/><rect x="285" y="66" width="1" height="1" fill="#000000"/><rect x="286" y="66" width="3" height="1" fill="#ffff99"/><rect x="289" y="66" width="1" height="1" fill="#000000"/><rect x="275" y="67" width="6" height="1" fill="#000080"/><rect x="281" y="67" width="1" height="1" fill="#000000"/><rect x="282" y="67" width="3" height="1" fill="#ffff99"/><rect x="285" y="67" width="1" height="1" fill="#000000"/><rect x="286" y="67" width="3" height="1" fill="#ffff99"/><rect x="289" y="67" width="1" height="1" fill="#000000"/><rect x="276" y="68" width="6" height="1" fill="#000000"/><rect x="282" y="68" width="3" height="1" fill="#ffff99"/><rect x="285" y="68" width="5" height="1" fill="#000000"/><rect x="281" y="69" width="1" height="1" fill="#000000"/><rect x="282" y="69" width="7" height="1" fill="#ffff99"/><rect x="289" y="69" width="1" height="1" fill="#000000"/><rect x="281" y="70" width="1" height="1" fill="#000000"/><rect x="282" y="70" width="7" height="1" fill="#ffff99"/><rect x="289" y="70" width="1" height="1" fill="#000000"/><rect x="282" y="71" width="1" height="1" fill="#000000"/><rect x="283" y="71" width="2" height="1" fill="#ffff99"/><rect x="285" y="71" width="1" height="1" fill="#000000"/><rect x="286" y="71" width="2" height="1" fill="#ffff99"/><rect x="288" y="71" width="1" height="1" fill="#000000"/><rect x="283" y="72" width="5" height="1" fill="#000000"/><rect x="8" y="8" width="1" height="1" fill="#000000"/><rect x="10" y="8" width="1" height="1" fill="#000000"/><rect x="12" y="8" width="1" height="1" fill="#000000"/><rect x="14" y="8" width="1" height="1" fill="#000000"/><rect x="16" y="8" width="1" height="1" fill="#000000"/><rect x="7" y="9" width="11" height="1" fill="#ffffff"/><rect x="7" y="10" width="1" height="1" fill="#ffffff"/><rect x="8" y="10" width="1" height="1" fill="#000000"/><rect x="9" y="10" width="1" height="1" fill="#ffffff"/><rect x="10" y="10" width="1" height="1" fill="#000000"/><rect x="11" y="10" width="1" height="1" fill="#ffffff"/><rect x="12" y="10" width="1" height="1" fill="#000000"/><rect x="13" y="10" width="1" height="1" fill="#ffffff"/><rect x="14" y="10" width="1" height="1" fill="#000000"/><rect x="15" y="10" width="1" height="1" fill="#ffffff"/><rect x="16" y="10" width="1" height="1" fill="#000000"/><rect x="17" y="10" width="1" height="1" fill="#ffffff"/><rect x="18" y="10" width="1" height="1" fill="#000000"/><rect x="7" y="11" width="11" height="1" fill="#ffffff"/><rect x="18" y="11" width="1" height="1" fill="#000000"/><rect x="7" y="12" width="11" height="1" fill="#ffffff"/><rect x="18" y="12" width="1" height="1" fill="#000000"/><rect x="7" y="13" width="2" height="1" fill="#ffffff"/><rect x="9" y="13" width="3" height="1" fill="#000000"/><rect x="12" y="13" width="1" height="1" fill="#ffffff"/><rect x="13" y="13" width="2" height="1" fill="#000000"/><rect x="15" y="13" width="3" height="1" fill="#ffffff"/><rect x="18" y="13" width="1" height="1" fill="#000000"/><rect x="7" y="14" width="11" height="1" fill="#ffffff"/><rect x="18" y="14" width="1" height="1" fill="#000000"/><rect x="7" y="15" width="2" height="1" fill="#ffffff"/><rect x="9" y="15" width="6" height="1" fill="#000000"/><rect x="15" y="15" width="3" height="1" fill="#ffffff"/><rect x="18" y="15" width="1" height="1" fill="#000000"/><rect x="7" y="16" width="11" height="1" fill="#ffffff"/><rect x="18" y="16" width="1" height="1" fill="#000000"/><rect x="7" y="17" width="2" height="1" fill="#ffffff"/><rect x="9" y="17" width="6" height="1" fill="#000000"/><rect x="15" y="17" width="3" height="1" fill="#ffffff"/><rect x="18" y="17" width="1" height="1" fill="#000000"/><rect x="7" y="18" width="11" height="1" fill="#ffffff"/><rect x="18" y="18" width="1" height="1" fill="#000000"/><rect x="7" y="19" width="2" height="1" fill="#ffffff"/><rect x="9" y="19" width="6" height="1" fill="#000000"/><rect x="15" y="19" width="3" height="1" fill="#ffffff"/><rect x="18" y="19" width="1" height="1" fill="#000000"/><rect x="7" y="20" width="11" height="1" fill="#ffffff"/><rect x="18" y="20" width="1" height="1" fill="#000000"/><rect x="7" y="21" width="11" height="1" fill="#ffffff"/><rect x="18" y="21" width="1" height="1" fill="#000000"/><rect x="7" y="22" width="11" height="1" fill="#ffffff"/><rect x="18" y="22" width="1" height="1" fill="#000000"/><rect x="8" y="23" width="11" height="1" fill="#000000"/><text x="276.3" y="66.6" font-family="Liberation Sans, sans-serif" font-size="6.6" font-weight="bold" fill="#a00000" letter-spacing="-0.4" shape-rendering="auto" clip-path="url(#calclip)">12</text></svg>
</div>
</body>
</html>
